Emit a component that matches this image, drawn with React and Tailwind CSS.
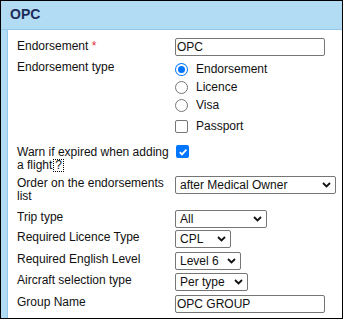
import React from 'react';

const Chevron = () => (
  <svg width="9" height="6" viewBox="0 0 9 6" className="shrink-0">
    <path d="M1 1 L4.5 4.5 L8 1" fill="none" stroke="#111" strokeWidth="1.8" />
  </svg>
);

const Select = ({ value, width }) => (
  <div
    className="flex h-[18px] items-center justify-between rounded-[2px] border border-[#767676] bg-white pl-[4px] pr-[4px] text-[12px] leading-none text-[#111]"
    style={{ width }}
  >
    <span>{value}</span>
    <Chevron />
  </div>
);

const TextInput = ({ value }) => (
  <div className="flex h-[18px] w-[150px] items-center rounded-[2px] border border-[#767676] bg-white pl-[1px] text-[12px] leading-none text-[#111]">
    {value}
  </div>
);

const Radio = ({ checked, label }) => (
  <div className="flex h-[18px] items-center">
    {checked ? (
      <span className="flex h-[13px] w-[13px] items-center justify-center rounded-full bg-[#0075ff]">
        <span className="h-[11px] w-[11px] rounded-full border-[2px] border-white bg-[#0075ff]" />
      </span>
    ) : (
      <span className="h-[13px] w-[13px] rounded-full border border-[#767676] bg-white" />
    )}
    <span className="ml-[8px] text-[12px] text-[#111]">{label}</span>
  </div>
);

const Row = ({ label, className = '', children }) => (
  <div className={`grid grid-cols-[158px_1fr] items-start ${className}`}>
    <div className="text-[12px] leading-[13px] text-[#111]">{label}</div>
    <div>{children}</div>
  </div>
);

const App = () => {
  return (
    <div
      className="flex h-[319px] w-[343px] flex-col border border-black bg-[#b2dcf3]"
      style={{ fontFamily: '"Liberation Sans", Arial, sans-serif' }}
    >
      <div className="flex h-[29px] shrink-0 items-center border-b border-[#93c8ea] pb-[2px] pl-[9px] text-[14px] font-bold text-[#1d2c5a]">
        OPC
      </div>
      <div className="ml-[6px] flex-1 border-l border-[#93c8ea] bg-white pl-[9px] pt-[8px]">
        <Row label={<span className="block pt-[2px]">Endorsement <span className="text-[#e0303a]">*</span></span>}>
          <TextInput value="OPC" />
        </Row>

        <Row label={<span className="block pt-[1px]">Endorsement type</span>} className="mt-[4px]">
          <Radio checked label="Endorsement" />
          <Radio label="Licence" />
          <Radio label="Visa" />
          <div className="mt-[3px] flex h-[18px] items-center">
            <span className="h-[13px] w-[13px] rounded-[2px] border border-[#767676] bg-white" />
            <span className="ml-[8px] text-[12px] text-[#111]">Passport</span>
          </div>
        </Row>

        <Row
          className="mt-[10px]"
          label={
            <div className="pt-[1px]">
              <div>Warn if expired when adding</div>
              <div className="flex items-start">
                <span>a flight</span>
                <span className="ml-px h-[13px] border border-dotted border-black px-[1px] leading-[11px]">?</span>
              </div>
            </div>
          }
        >
          <span className="ml-[1px] flex h-[13px] w-[13px] items-center justify-center rounded-[2px] bg-[#0075ff]">
            <svg width="10" height="10" viewBox="0 0 10 10">
              <path d="M1.8 5.2 L4 7.4 L8.4 2.6" fill="none" stroke="#fff" strokeWidth="1.8" />
            </svg>
          </span>
        </Row>

        <Row className="mt-[4px]" label={<span className="block pt-[1px]">Order on the endorsements list</span>}>
          <Select value="after Medical Owner" width={161} />
        </Row>

        <Row className="mt-[7px]" label={<span className="block pt-[1px]">Trip type</span>}>
          <Select value="All" width={92} />
        </Row>

        <Row className="mt-[2px]" label={<span className="block pt-[1px]">Required Licence Type</span>}>
          <Select value="CPL" width={56} />
        </Row>

        <Row className="mt-[4px]" label={<span className="block pt-[1px]">Required English Level</span>}>
          <Select value="Level 6" width={66} />
        </Row>

        <Row className="mt-[3px]" label={<span className="block pt-[1px]">Aircraft selection type</span>}>
          <Select value="Per type" width={73} />
        </Row>

        <Row className="mt-[4px]" label={<span className="block pt-[1px]">Group Name</span>}>
          <TextInput value="OPC GROUP" />
        </Row>
      </div>
    </div>
  );
};

export default App;
